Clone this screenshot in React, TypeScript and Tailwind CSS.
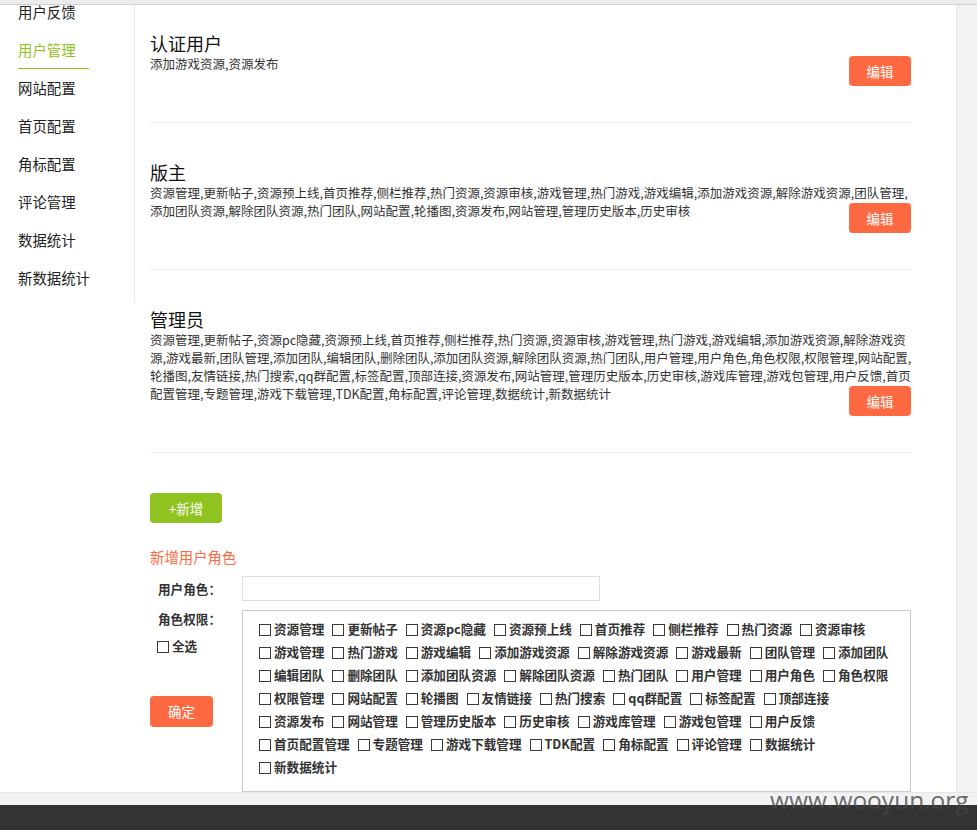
const menu = ['用户反馈', '用户管理', '网站配置', '首页配置', '角标配置', '评论管理', '数据统计', '新数据统计'];

const perms = [
  '资源管理', '更新帖子', '资源pc隐藏', '资源预上线', '首页推荐', '侧栏推荐', '热门资源', '资源审核',
  '游戏管理', '热门游戏', '游戏编辑', '添加游戏资源', '解除游戏资源', '游戏最新', '团队管理', '添加团队',
  '编辑团队', '删除团队', '添加团队资源', '解除团队资源', '热门团队', '用户管理', '用户角色', '角色权限',
  '权限管理', '网站配置', '轮播图', '友情链接', '热门搜索', 'qq群配置', '标签配置', '顶部连接',
  '资源发布', '网站管理', '管理历史版本', '历史审核', '游戏库管理', '游戏包管理', '用户反馈',
  '首页配置管理', '专题管理', '游戏下载管理', 'TDK配置', '角标配置', '评论管理', '数据统计',
  '新数据统计',
];

const roles = [
  { name: '认证用户', desc: '添加游戏资源,资源发布' },
  {
    name: '版主',
    desc: '资源管理,更新帖子,资源预上线,首页推荐,侧栏推荐,热门资源,资源审核,游戏管理,热门游戏,游戏编辑,添加游戏资源,解除游戏资源,团队管理,添加团队资源,解除团队资源,热门团队,网站配置,轮播图,资源发布,网站管理,管理历史版本,历史审核',
  },
  { name: '管理员', desc: perms.join(',') },
];

function Sidebar() {
  return (
    <aside className="-mt-[12px] w-[135px] shrink-0 border-r border-[#eaeaea] pb-[6px]">
      {menu.map((m) => (
        <div key={m} className="flex h-[38px] items-stretch pl-[18px] text-[14.4px]">
          {m === '用户管理' ? (
            <span className="flex w-[71px] items-center border-b border-[#8fc320] text-[#8fc320]">{m}</span>
          ) : (
            <span className="flex items-center text-[#222]">{m}</span>
          )}
        </div>
      ))}
    </aside>
  );
}

function RoleCard(props: { name: string; desc: string; first?: boolean }) {
  return (
    <section className={(props.first ? 'pt-[26px]' : 'pt-[37px]') + ' border-b border-[#efefef] pb-[36px]'}>
      <h2 className="text-[18px] leading-[24px] text-[#111]">{props.name}</h2>
      <p className="w-[768px] text-[12.5px] leading-[18px] text-[#333]">{props.desc}</p>
      <div className="-mt-[17px] flex justify-end">
        <button className="h-[30px] w-[62px] rounded-[4px] bg-[#ff6941] text-[13.5px] text-white">编辑</button>
      </div>
    </section>
  );
}

function Check(props: { label: string; className?: string }) {
  return (
    <label className={'flex h-[23px] items-center ' + (props.className ?? '')}>
      <span className="mr-[3px] h-[12px] w-[12px] border border-[#3a3a3a] bg-white" />
      <span className="text-[12.6px] font-bold text-[#333]">{props.label}</span>
    </label>
  );
}

export default function App() {
  return (
    <div className="relative h-[830px] w-[977px] overflow-hidden bg-[#f2f2f2] font-['Noto_Sans_CJK_SC',sans-serif] text-[#333]">
      <div className="h-[5px] border-b border-[#cfcfcf] bg-[#ececec]" />
      <div className="flex h-[787px]">
        <div className="flex w-[957px] items-start overflow-hidden border-r border-[#e4e4e4] bg-white">
          <Sidebar />
          <main className="w-[776px] pl-[15px]">
            {roles.map((r, i) => (
              <RoleCard key={r.name} name={r.name} desc={r.desc} first={i === 0} />
            ))}

            <button className="mt-[40px] h-[30px] w-[72px] rounded-[4px] bg-[#8fc320] text-[13.5px] text-white">+新增</button>

            <h3 className="mt-[25px] text-[14.4px] leading-[18px] text-[#ff6941]">新增用户角色</h3>

            <div className="mt-[10px] flex items-center">
              <span className="w-[92px] pl-[8px] text-[12.6px] font-bold leading-[18px] text-[#333]">用户角色：</span>
              <input className="h-[25px] w-[358px] border border-[#dedede] outline-none" />
            </div>

            <div className="mt-[9px] flex">
              <div className="w-[92px] shrink-0">
                <div className="pl-[8px] text-[12.6px] font-bold leading-[18px] text-[#333]">角色权限：</div>
                <Check label="全选" className="mt-[7px] pl-[7px]" />
                <button className="mt-[38px] h-[31px] w-[63px] rounded-[4px] bg-[#ff6941] text-[13.5px] text-white">确定</button>
              </div>
              <div className="w-[669px] border border-[#cccccc] pb-[12px] pl-[16px] pr-[4px] pt-[7px]">
                <div className="flex flex-wrap">
                  {perms.map((p) => (
                    <Check key={p} label={p} className="mr-[8px]" />
                  ))}
                </div>
              </div>
            </div>
          </main>
        </div>
      </div>
      <div className="h-[13px] border-t border-[#e6e6e6]" />
      <div className="h-[25px] bg-[#333333]" />
      <div className="absolute left-[770px] top-[787px] font-['Open_Sans',sans-serif] text-[24.5px] leading-[25px] text-[rgba(70,70,70,0.8)]">
        www.wooyun.org
      </div>
    </div>
  );
}
